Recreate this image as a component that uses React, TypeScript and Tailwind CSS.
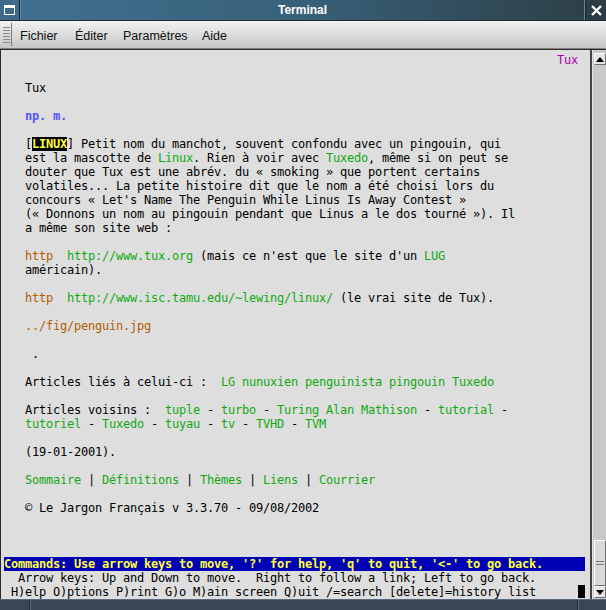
import React from "react";

type Seg = [string, string?];

const G = "text-[#10aa10]";
const O = "text-[#b45c00]";

const blank: Seg[] = [];

const rows: Seg[][] = [
    [[" ".repeat(79)], ["Tux", "text-[#b000b0]"]],
    blank,
    [["   Tux"]],
    blank,
    [["   "], ["np. m.", "text-[#5454ff] font-bold"]],
    blank,
    [
        ["   ["],
        ["LINUX", "bg-black text-[#ffff40] font-bold"],
        ["] Petit nom du manchot, souvent confondu avec un pingouin, qui"],
    ],
    [["   est la mascotte de "], ["Linux", G], [". Rien à voir avec "], ["Tuxedo", G], [", même si on peut se"]],
    [["   douter que Tux est une abrév. du « smoking » que portent certains"]],
    [["   volatiles... La petite histoire dit que le nom a été choisi lors du"]],
    [["   concours « Let's Name The Penguin While Linus Is Away Contest »"]],
    [["   (« Donnons un nom au pingouin pendant que Linus a le dos tourné »). Il"]],
    [["   a même son site web :"]],
    blank,
    [["   "], ["http", O], ["  "], ["http://www.tux.org", G], [" (mais ce n'est que le site d'un "], ["LUG", G]],
    [["   américain)."]],
    blank,
    [["   "], ["http", O], ["  "], ["http://www.isc.tamu.edu/~lewing/linux/", G], [" (le vrai site de Tux)."]],
    blank,
    [["   "], ["../fig/penguin.jpg", O]],
    blank,
    [["    ."]],
    blank,
    [["   Articles liés à celui-ci :  "], ["LG nunuxien penguinista pingouin Tuxedo", G]],
    blank,
    [
        ["   Articles voisins :  "],
        ["tuple", G],
        [" - "],
        ["turbo", G],
        [" - "],
        ["Turing Alan Mathison", G],
        [" - "],
        ["tutorial", G],
        [" -"],
    ],
    [
        ["   "],
        ["tutoriel", G],
        [" - "],
        ["Tuxedo", G],
        [" - "],
        ["tuyau", G],
        [" - "],
        ["tv", G],
        [" - "],
        ["TVHD", G],
        [" - "],
        ["TVM", G],
    ],
    blank,
    [["   (19-01-2001)."]],
    blank,
    [
        ["   "],
        ["Sommaire", G],
        [" | "],
        ["Définitions", G],
        [" | "],
        ["Thèmes", G],
        [" | "],
        ["Liens", G],
        [" | "],
        ["Courrier", G],
    ],
    blank,
    [["   © Le Jargon Français v 3.3.70 - 09/08/2002"]],
    blank,
    blank,
    blank,
];

function ArrowBtn({ up }: { up?: boolean }) {
    return (
        <div className="w-[12px] h-[12px] bg-[#e6e6e6] border-t border-l border-white border-b border-r border-b-[#707070] border-r-[#707070] flex items-center justify-center">
            <svg width="8" height="5" viewBox="0 0 8 5">
                {up ? <path d="M0 5 L4 0 L8 5 Z" fill="#000" /> : <path d="M0 0 L4 5 L8 0 Z" fill="#000" />}
            </svg>
        </div>
    );
}

export default function App() {
    return (
        <div className="w-[606px] h-[610px] flex flex-col overflow-hidden bg-[#dddddd] font-['Liberation_Sans',Arial,sans-serif]">
            {/* Title bar */}
            <header className="h-[21px] flex border-b border-[#1b2a31] bg-[#2c3f45]">
                <div className="w-[20px] bg-[#3d6a8b] border-r border-[#1b2a31] flex items-center justify-center">
                    <svg width="11" height="10" viewBox="0 0 11 10">
                        <rect x="0.5" y="0.5" width="10" height="9" fill="none" stroke="#fff" />
                        <rect x="0" y="0" width="11" height="3" fill="#fff" />
                    </svg>
                </div>
                <div className="flex-1 flex items-center justify-center bg-gradient-to-r from-[#40708f] via-[#386079] to-[#2d4148] border-x border-[#5d87a3] text-white text-[12px] font-bold">
                    Terminal
                </div>
                <div className="w-[21px] bg-[#2c3d43] border-l border-[#1b2a31] flex items-center justify-center">
                    <svg width="11" height="11" viewBox="0 0 11 11">
                        <path d="M1 1 L10 10 M10 1 L1 10" stroke="#fff" strokeWidth="2.4" />
                    </svg>
                </div>
            </header>

            {/* Menu bar */}
            <nav className="h-[28px] flex items-stretch bg-gradient-to-b from-[#f2f2f2] to-[#c6c6c6] border-b border-[#808080]">
                <div className="w-[10px] ml-[2px] my-[2px] border-r border-[#7a7a7a] flex flex-col justify-center gap-[2px]">
                    {[0, 1, 2, 3, 4, 5].map((i) => (
                        <div key={i} className="h-[1px] w-[7px] ml-[1px] bg-[#8a8a8a]" />
                    ))}
                </div>
                <div className="flex items-center pl-[8px] pt-[3px] text-[12.5px] text-[#111]">
                    <span className="w-[55px]">Fichier</span>
                    <span className="w-[48px]">Éditer</span>
                    <span className="w-[79px]">Paramètres</span>
                    <span>Aide</span>
                </div>
            </nav>

            {/* Terminal body */}
            <main className="flex-1 flex min-h-0 border-t border-[#2a2a2a] bg-[#dedede]">
                <div className="flex-1 border-l border-[#2a2a2a] pl-[3px] pt-[3px] border-r-2 border-r-[#444]">
                    <div className="w-[581px] font-['DejaVu_Sans_Mono',monospace] text-[12px] tracking-[-0.225px] text-black">
                        {rows.map((segs, i) => (
                            <div key={i} className="h-[14px] leading-[14px] whitespace-pre">
                                {segs.map(([t, c], j) => (
                                    <span key={j} className={c}>
                                        {t}
                                    </span>
                                ))}
                            </div>
                        ))}
                        <div className="h-[14px] leading-[14px] whitespace-pre bg-[#0000b4] text-[#ffff40] font-bold">
                            Commands: Use arrow keys to move, '?' for help, 'q' to quit, '&lt;-' to go back.
                        </div>
                        <div className="h-[14px] leading-[14px] whitespace-pre">
                            {"  Arrow keys: Up and Down to move.  Right to follow a link; Left to go back."}
                        </div>
                        <div className="h-[14px] leading-[14px] whitespace-pre flex">
                            <span>
                                {" H)elp O)ptions P)rint G)o M)ain screen Q)uit /=search [delete]=history list".padEnd(82)}
                            </span>
                            <span className="inline-block w-[7px] h-[13px] bg-black" />
                        </div>
                    </div>
                </div>

                {/* Scrollbar */}
                <aside className="w-[14px] bg-[#c9c9c9] border-l border-[#e2e2e2] flex flex-col items-center pt-[3px] pb-[1px]">
                    <ArrowBtn up />
                    <div className="flex-1 w-full flex flex-col justify-end items-center">
                        <div className="w-[12px] h-[46px] bg-[#d9d9d9] border-t border-l border-white border-b border-r border-b-[#6e6e6e] border-r-[#6e6e6e] flex flex-col items-center justify-center gap-[2px]">
                            <div className="w-[8px] h-[1px] bg-[#7a7a7a]" />
                            <div className="w-[8px] h-[1px] bg-[#7a7a7a]" />
                        </div>
                    </div>
                    <ArrowBtn />
                </aside>
            </main>

            {/* Bottom frame */}
            <footer className="h-[11px] flex bg-[#3a4653] border-t border-[#5a6a7a]">
                <div className="w-[30px] border-r border-[#22303a]" />
                <div className="w-[548px] border-l border-[#56687a] border-r border-r-[#22303a]" />
                <div className="flex-1 border-l border-[#56687a]" />
            </footer>
        </div>
    );
}
